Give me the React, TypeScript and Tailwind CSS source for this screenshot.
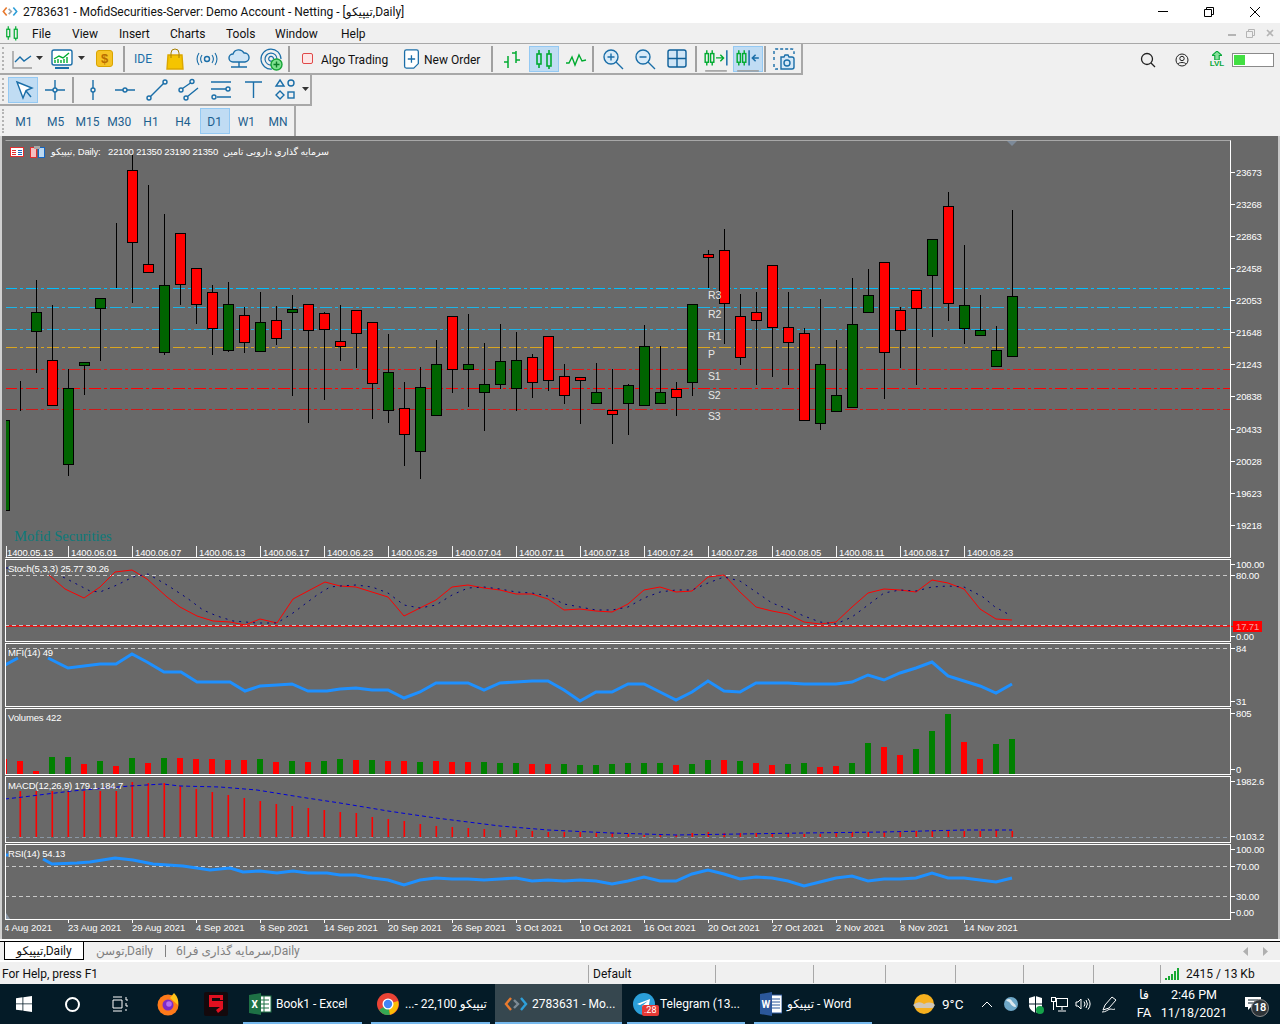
import type { ReactNode } from 'react'

type Candle = [number, number, number, number, 'r' | 'g'] // hi, top, bottom, lo

const FONT = "font-['Liberation_Sans','DejaVu_Sans',sans-serif]"
const UI = "font-['Roboto','DejaVu_Sans',sans-serif]"

const candles: Candle[] = [
  [420, 420, 510, 510, 'g'], [381, 381, 381, 411, 'r'], [280, 312, 331, 373, 'g'], [305, 360, 405, 405, 'r'],
  [369, 388, 464, 476, 'g'], [362, 362, 365, 395, 'g'], [298, 298, 308, 361, 'g'], [223, 223, 223, 288, 'r'],
  [155, 170, 242, 303, 'r'], [185, 264, 272, 272, 'r'], [214, 285, 352, 355, 'g'], [233, 233, 284, 305, 'r'],
  [268, 268, 304, 324, 'r'], [285, 292, 328, 355, 'r'], [282, 304, 350, 352, 'g'], [307, 315, 342, 353, 'r'],
  [292, 322, 351, 351, 'g'], [306, 320, 338, 345, 'r'], [295, 309, 312, 396, 'g'], [304, 304, 330, 423, 'r'],
  [312, 313, 329, 400, 'r'], [305, 341, 346, 361, 'r'], [310, 310, 333, 368, 'r'], [322, 322, 383, 419, 'r'],
  [334, 372, 410, 423, 'g'], [382, 408, 434, 466, 'r'], [367, 387, 451, 479, 'g'], [340, 364, 415, 415, 'g'],
  [316, 316, 369, 393, 'r'], [314, 364, 369, 407, 'g'], [343, 384, 392, 431, 'g'], [324, 361, 384, 389, 'g'],
  [332, 360, 388, 411, 'g'], [354, 357, 382, 398, 'r'], [336, 336, 380, 391, 'r'], [364, 376, 395, 404, 'r'],
  [377, 377, 380, 424, 'r'], [363, 392, 403, 403, 'g'], [369, 410, 414, 444, 'r'], [384, 385, 403, 435, 'g'],
  [325, 346, 405, 405, 'g'], [346, 392, 403, 403, 'g'], [382, 389, 397, 416, 'r'], [304, 304, 382, 396, 'g'],
  [250, 254, 257, 288, 'r'], [229, 250, 303, 344, 'r'], [294, 316, 357, 365, 'r'], [292, 312, 320, 385, 'r'],
  [265, 265, 327, 377, 'r'], [292, 327, 342, 385, 'r'], [328, 333, 420, 420, 'r'], [299, 364, 423, 430, 'g'],
  [340, 395, 411, 411, 'g'], [278, 324, 407, 407, 'g'], [269, 295, 312, 312, 'g'], [262, 262, 352, 399, 'r'],
  [307, 310, 330, 368, 'r'], [290, 290, 308, 385, 'r'], [239, 239, 275, 337, 'g'], [192, 206, 303, 321, 'r'],
  [245, 305, 328, 344, 'g'], [295, 330, 335, 335, 'g'], [326, 350, 366, 366, 'g'], [210, 296, 356, 356, 'g'],
]

const stochK = '49,575 65,589 84,598 100,587 115,572 132,570 147,579 167,597 180,607 197,616 213,621 230,622 245,625 260,619 277,623 293,599 308,591 325,582 340,586 356,587 372,592 388,597 404,616 420,608 436,600 452,587 468,585 484,588 500,590 516,594 532,594 548,599 564,610 580,609 596,611 612,612 628,604 644,590 660,587 676,592 692,591 708,577 724,575 740,592 756,607 772,611 788,614 804,622 820,624 836,622 852,607 868,593 884,589 900,590 916,592 932,580 948,583 964,589 980,609 996,619 1012,620'
const stochD = '63,577 90,591 100,592 117,585 133,577 148,574 167,585 187,598 203,610 217,616 233,621 257,623 277,623 293,613 317,595 330,587 340,586 356,585 372,587 388,593 404,605 420,608 436,605 452,595 468,588 484,587 500,589 516,592 532,593 548,596 564,604 580,607 596,610 612,610 628,607 644,598 660,592 676,590 692,590 708,583 724,577 740,581 756,592 772,603 788,609 804,616 820,622 836,624 852,617 868,605 884,593 900,590 916,591 932,587 948,586 964,587 983,597 995,607 1008,614'
const mfi = '48,658 68,668 84,666 100,664 116,664 132,654 147,662 164,672 181,672 197,682 230,682 245,691 260,686 277,685 292,684 308,691 327,691 340,689 356,688 372,690 388,690 404,698 420,692 436,683 452,683 468,683 484,690 500,683 516,682 532,681 548,681 564,690 580,701 596,692 612,692 628,684 644,684 660,692 676,700 692,692 708,681 724,691 740,692 756,683 772,683 788,683 804,684 820,684 836,684 852,682 868,675 884,680 900,673 916,668 932,662 948,676 964,681 980,686 996,693 1012,684'
const rsi = '43,859 52,864 77,863 90,862 115,858 133,860 153,864 183,866 210,870 230,868 243,872 260,871 277,873 293,871 308,873 327,873 340,875 356,875 372,878 388,880 404,885 420,880 436,878 452,879 468,879 484,880 500,879 516,878 532,881 548,880 564,881 580,880 596,881 612,884 628,881 644,877 660,881 676,881 692,874 708,870 724,874 740,879 756,877 772,878 788,881 804,886 820,882 836,878 852,876 868,881 884,879 900,879 916,878 932,873 948,878 964,878 980,880 996,882 1012,878'
const signal = '5,799 23,797 47,794 72,791 130,786 163,784 180,786 220,787 257,790 300,797 340,803 388,811 436,818 500,826 548,830 612,833 676,835 740,834 804,833 884,832 964,830 1012,830'

const volumes: [number, 'r' | 'g'][] = [
  [759, 'r'], [761, 'r'], [771, 'r'], [757, 'g'], [757, 'g'], [764, 'r'], [761, 'g'], [766, 'r'], [758, 'g'], [763, 'r'], [758, 'g'],
  [758, 'r'], [759, 'r'], [759, 'r'], [760, 'r'], [760, 'r'], [759, 'g'], [762, 'r'], [761, 'g'], [762, 'r'], [761, 'g'], [759, 'g'],
  [760, 'r'], [760, 'g'], [761, 'r'], [761, 'r'], [762, 'g'], [761, 'r'], [762, 'r'], [762, 'r'], [762, 'g'], [763, 'g'], [763, 'g'],
  [764, 'r'], [764, 'r'], [764, 'g'], [765, 'g'], [765, 'g'], [764, 'g'], [763, 'g'], [763, 'g'], [763, 'g'], [765, 'r'], [764, 'g'],
  [760, 'g'], [760, 'r'], [761, 'g'], [763, 'r'], [765, 'r'], [764, 'g'], [763, 'g'], [767, 'r'], [766, 'r'], [763, 'g'], [743, 'g'],
  [747, 'r'], [755, 'r'], [749, 'g'], [731, 'g'], [714, 'g'], [742, 'r'], [759, 'r'], [744, 'g'], [739, 'g'],
]

const macdTops = [791, 791, 791, 791, 791, 791, 791, 782, 783, 783, 786, 789, 792, 795, 798, 801, 804, 806, 808, 810, 812, 813, 817, 819, 821, 824, 826, 827, 828, 829, 830, 830, 831, 832, 832, 832, 833, 833, 834, 835, 835, 835, 833, 832, 833, 833, 833, 833, 833, 834, 834, 833, 832, 832, 832, 832, 831, 831, 831, 831, 831, 830, 831]

const priceTicks: [string, number][] = [['23673', 172], ['23268', 204], ['22863', 236], ['22458', 268], ['22053', 300], ['21648', 332], ['21243', 364], ['20838', 396], ['20433', 429], ['20028', 461], ['19623', 493], ['19218', 525]]
const hijri = ['1400.05.13', '1400.06.01', '1400.06.07', '1400.06.13', '1400.06.17', '1400.06.23', '1400.06.29', '1400.07.04', '1400.07.11', '1400.07.18', '1400.07.24', '1400.07.28', '1400.08.05', '1400.08.11', '1400.08.17', '1400.08.23']
const dates = ['4 Aug 2021', '23 Aug 2021', '29 Aug 2021', '4 Sep 2021', '8 Sep 2021', '14 Sep 2021', '20 Sep 2021', '26 Sep 2021', '3 Oct 2021', '10 Oct 2021', '16 Oct 2021', '20 Oct 2021', '27 Oct 2021', '2 Nov 2021', '8 Nov 2021', '14 Nov 2021']
const pivots: [number, string, string, number, number][] = [
  [288, '#00bfff', 'R3', 295, 1.4], [307, '#1cb4e8', 'R2', 314, 1], [329, '#1cb4e8', 'R1', 336, 1], [347, '#daa520', 'P', 354, 1],
  [369, '#e01818', 'S1', 376, 1], [388, '#ff0000', 'S2', 395, 1.4], [409, '#d01818', 'S3', 416, 1],
]

function Svg({ x, y, w, h, children }: { x: number; y: number; w: number; h: number; children?: ReactNode }) {
  return (
    <svg width={w} height={h} viewBox={`${x} ${y} ${w} ${h}`} className="block" fontSize={9.5} letterSpacing={-0.15} fill="#ffffff">
      {children}
    </svg>
  )
}

function Dashed({ y }: { y: number }) {
  return <line x1={5} x2={1230} y1={y + 0.5} y2={y + 0.5} stroke="#c8c8c8" strokeDasharray="4 3" />
}

function Pane({ y, h, frame, plot, axis }: { y: number; h: string; frame: string; plot: ReactNode; axis: ReactNode }) {
  const height = Number(h)
  return (
    <div className="flex">
      <div className={`w-[1226px] border-r border-white ${frame}`}>
        <Svg x={6} y={y + 1} w={1224} h={height - 2}>{plot}</Svg>
      </div>
      <Svg x={1231} y={y} w={47} h={height}>{axis}</Svg>
    </div>
  )
}

function AxisLabel({ y, t, tick = true }: { y: number; t: string; tick?: boolean }) {
  return (
    <>
      {tick && <line x1={1231} x2={1235} y1={y + 0.5} y2={y + 0.5} stroke="#fff" />}
      <text x={1236} y={y + 4}>{t}</text>
    </>
  )
}

function Ico({ children, s = 24 }: { children: ReactNode; s?: number }) {
  return <svg width={s} height={s} viewBox="0 0 24 24" fill="none" strokeWidth={1.4}>{children}</svg>
}

function Btn({ active, children }: { active?: boolean; children: ReactNode }) {
  return (
    <div className="flex h-full w-[32px] items-center justify-center">
      <div className={`flex h-[26px] w-[30px] items-center justify-center border ${active ? 'border-[#94c9f3] bg-[#c0dcf3]' : 'border-transparent'}`}>{children}</div>
    </div>
  )
}

const Sep = ({ cls = '' }: { cls?: string }) => <div className={`h-[26px] w-[2px] shrink-0 bg-[#a0a0a0] ${cls}`} />
const Handle = ({ w }: { w: string }) => (
  <div className={`h-full shrink-0 py-[3px] pl-[2px] ${w}`}><div className="h-full w-[2px] border-l-2 border-dotted border-[#b4b4b4]" /></div>
)
const Caret = () => <svg width={8} height={5}><path d="M0 0h7L3.5 4z" fill="#333" /></svg>

const B = '#1a6ea8'
const G = '#00ab30'

function CandleIcon({ s = 24 }: { s?: number }) {
  return (
    <Ico s={s}>
      <g stroke={G} strokeWidth={1.6}>
        <rect x={5} y={7} width={4} height={10} /><path d="M7 3v4M7 17v4" />
        <rect x={15} y={7} width={4} height={12} /><path d="M17 3v4M17 19v3" />
      </g>
    </Ico>
  )
}

function Toolbar1() {
  return (
    <div className="flex h-[31px] w-[803px] items-center border-r-2 border-b-2 border-[#a8a8a8]">
      <Handle w="w-[10px]" />
      <div className="flex w-[24px] justify-center">
        <Ico><path d="M3 4v17h19" stroke="#9a9a9a" /><path d="M5 15l5-5 4 4 7-5" stroke={B} /></Ico>
      </div>
      <div className="flex w-[12px] justify-center"><Caret /></div>
      <div className="flex w-[32px] justify-center">
        <Ico>
          <rect x={2} y={3} width={20} height={15} rx={2} stroke={B} fill="#fff" />
          <path d="M4 12l5-3 4 2 6-5" stroke={G} /><path d="M5 16v-3M8 16v-4M11 16v-3M14 16v-4M17 16v-6" stroke={G} />
          <path d="M5 21h14" stroke={B} strokeWidth={2} />
        </Ico>
      </div>
      <div className="flex w-[8px] justify-center"><Caret /></div>
      <div className="flex w-[37px] justify-center">
        <div className={`flex h-[17px] w-[17px] items-center justify-center rounded-[3px] border border-[#d9a400] bg-[#f6c324] text-[13px] font-bold text-[#b96e00] ${FONT}`}>$</div>
      </div>
      <Sep cls="mr-[2px]" />
      <Btn><span className="text-[12px] text-[#1a6ea8]">IDE</span></Btn>
      <Btn>
        <Ico>
          <path d="M5 8h14l1 14H4z" fill="#f5c400" stroke="#dba700" /><path d="M8 11V6a4 4 0 0 1 8 0v5" stroke="#a88000" strokeWidth={1} />
        </Ico>
      </Btn>
      <Btn>
        <Ico>
          <circle cx={12} cy={12} r={2.5} stroke={B} />
          <path d="M7 8a7 7 0 0 0 0 8M17 8a7 7 0 0 1 0 8M4 6a11 11 0 0 0 0 12M20 6a11 11 0 0 1 0 12" stroke={B} strokeWidth={1.1} />
        </Ico>
      </Btn>
      <Btn>
        <Ico>
          <path d="M6 15a4 4 0 0 1 0-8 6 6 0 0 1 11-1 4.5 4.5 0 0 1 1 9z" stroke={B} fill="#cfe5f6" />
          <path d="M12 15v5M4 20h16" stroke={B} />
        </Ico>
      </Btn>
      <Btn>
        <Ico>
          <path d="M13 22A10 10 0 1 1 22 12M13 18a6 6 0 1 1 5-6M13 14a2.4 2.4 0 1 1 1.5-2" stroke={B} strokeWidth={1.2} />
          <circle cx={17.5} cy={17.5} r={5.5} fill="#7fe08f" stroke="#17a438" />
          <path d="M17.5 14.5v6M14.5 17.5h6" stroke="#0d7d29" />
        </Ico>
      </Btn>
      <Sep cls="ml-px" />
      <div className="ml-[12px] h-[11px] w-[11px] shrink-0 rounded-[2px] border border-[#e04848] bg-[#fde6e6]" />
      <span className="ml-[8px] w-[78px] shrink-0 pt-[2px] text-[12px] text-[#111]">Algo Trading</span>
      <div className="flex w-[24px] justify-center">
        <Ico s={22}>
          <path d="M5 4a2 2 0 0 1 2-2h11a2 2 0 0 1 2 2v13l-5 5H7a2 2 0 0 1-2-2z" stroke={B} fill="#fff" />
          <path d="M12.5 8v8M8.5 12h8" stroke={B} />
        </Ico>
      </div>
      <span className="ml-[1px] w-[67px] shrink-0 pt-[2px] text-[12px] text-[#111]">New Order</span>
      <Sep cls="mr-[3px]" />
      <Btn>
        <Ico>
          <path d="M8 9v12M5 15h3M16 4v12M16 13h4M4 15h4" stroke={G} strokeWidth={1.5} /><path d="M12 6h4" stroke={G} strokeWidth={1.5} />
        </Ico>
      </Btn>
      <Btn active><CandleIcon /></Btn>
      <Btn><Ico><path d="M2 16h3l3-6 3 8 4-10 3 6 4-1" stroke={G} /></Ico></Btn>
      <Sep />
      <div className="w-[3px] shrink-0" />
      <Btn><Ico><circle cx={10} cy={10} r={7} stroke={B} fill="#d9ebf8" /><path d="M15 15l7 7M10 6.5v7M6.5 10h7" stroke={B} /></Ico></Btn>
      <Btn><Ico><circle cx={10} cy={10} r={7} stroke={B} fill="#d9ebf8" /><path d="M15 15l7 7M6.5 10h7" stroke={B} /></Ico></Btn>
      <Btn><Ico><rect x={3} y={3} width={18} height={17} rx={2} stroke="#0d5f99" fill="#cfe5f6" /><path d="M12 3v17M3 11.5h18" stroke="#0d5f99" /></Ico></Btn>
      <Sep cls="ml-[2px]" />
      <div className="w-[3px] shrink-0" />
      <Btn>
        <Ico s={26}>
          <g stroke={G} strokeWidth={1.3}><rect x={2} y={7} width={3} height={8} /><rect x={7} y={7} width={3} height={8} /><path d="M3.5 4v3M3.5 15v3M8.5 4v3M8.5 15v3M12 11h7M16 8l3 3-3 3" /></g>
          <path d="M22 4v14" stroke={B} /><path d="M2 23h20" stroke="#9a9a9a" />
        </Ico>
      </Btn>
      <Btn active>
        <Ico s={26}>
          <g stroke={G} strokeWidth={1.3}><rect x={2} y={7} width={3} height={8} /><rect x={7} y={7} width={3} height={8} /><path d="M3.5 4v3M3.5 15v3M8.5 4v3M8.5 15v3" /></g>
          <path d="M13 4v14M22 11h-6M19 8l-3 3 3 3" stroke={B} /><path d="M2 23h20" stroke="#9a9a9a" />
        </Ico>
      </Btn>
      <Sep />
      <div className="flex flex-1 justify-center">
        <Ico>
          <path d="M2 7V4a2 2 0 0 1 2-2h16a2 2 0 0 1 2 2v3M2 10v3M2 17v3a2 2 0 0 0 2 2h2" stroke={B} strokeDasharray="3 2" />
          <path d="M9 22h11a2 2 0 0 0 2-2v-8a2 2 0 0 0-2-2h-3l-1-2h-3l-1 2H9z" stroke={B} fill="#d5e8f7" /><circle cx={15} cy={16} r={3} stroke={B} />
        </Ico>
      </div>
    </div>
  )
}

function Toolbar2() {
  return (
    <div className="flex h-[31px] w-[312px] items-center border-r-2 border-b-2 border-[#a8a8a8]">
      <Handle w="w-[7px]" />
      <Btn active>
        <Ico><path d="M6 4l15 6-6 2.5L12 20z" stroke={B} fill="#fff" /><path d="M15 13l5 6" stroke={B} /></Ico>
      </Btn>
      <Btn><Ico><circle cx={12} cy={12} r={2} stroke={B} /><path d="M12 2v8M12 14v8M2 12h8M14 12h8" stroke={B} /></Ico></Btn>
      <Sep cls="ml-[1px] mr-[3px]" />
      <Btn><Ico><circle cx={12} cy={12} r={2} stroke={B} /><path d="M12 2v8M12 14v8" stroke={B} /></Ico></Btn>
      <Btn><Ico><circle cx={12} cy={12} r={2} stroke={B} /><path d="M2 12h8M14 12h8" stroke={B} /></Ico></Btn>
      <Btn><Ico><circle cx={4} cy={20} r={2} stroke={B} /><circle cx={20} cy={4} r={2} stroke={B} /><path d="M5.5 18.5l13-13" stroke={B} /></Ico></Btn>
      <Btn>
        <Ico><circle cx={4} cy={12} r={2} stroke={B} /><circle cx={15} cy={3.5} r={2} stroke={B} /><circle cx={9} cy={20} r={2} stroke={B} /><path d="M5.5 10.5l8-5.5M10.5 18.5L21 10" stroke={B} /></Ico>
      </Btn>
      <Btn>
        <Ico><path d="M2 4h20M2 11h15M8 19h14M2 11h0" stroke={B} /><circle cx={19} cy={11} r={2} stroke={B} /><circle cx={5} cy={19} r={2} stroke={B} /></Ico>
      </Btn>
      <Btn><Ico><path d="M4 4h17M12.5 4v16" stroke={B} /></Ico></Btn>
      <Btn>
        <Ico><path d="M7 2l4 6H3z" stroke={B} /><circle cx={18} cy={5} r={3} stroke={B} /><path d="M7 13l4 4-4 4-4-4z" stroke={B} /><rect x={15} y={14} width={6} height={6} stroke={B} /></Ico>
      </Btn>
      <div className="flex flex-1 justify-center"><Caret /></div>
    </div>
  )
}

function Toolbar3() {
  const frames = ['M1', 'M5', 'M15', 'M30', 'H1', 'H4', 'D1', 'W1', 'MN']
  return (
    <div className="flex h-[30px] w-[296px] items-center border-r-2 border-[#a8a8a8]">
      <Handle w="w-[8px]" />
      {frames.map((f) => (
        <Btn key={f} active={f === 'D1'}><span className="pt-[2px] text-[12px] text-[#1d5f8e]">{f}</span></Btn>
      ))}
    </div>
  )
}

function ChartArea() {
  return (
    <div className={`flex h-[803px] flex-col gap-px border-r-2 border-l-2 border-r-[#c8c8c8] border-l-[#d0d0d0] bg-[#696969] pt-[4px] pl-[3px] ${FONT}`}>
      <Pane
        y={140}
        h="418"
        frame="border-t border-b border-l border-t-[#a8a8a8] border-b-white border-l-[#696969]"
        plot={
          <>
            {pivots.map(([y, c, , , sw]) => (
              <line key={y} x1={5} x2={1230} y1={y + 0.5} y2={y + 0.5} stroke={c} strokeWidth={sw} strokeDasharray="12 3 3 3" shapeRendering="crispEdges" />
            ))}
            {candles.map(([hi, top, bottom, lo, c], i) => {
              const x = 4 + i * 16
              return (
                <g key={x} shapeRendering="crispEdges">
                  <line x1={x + 0.5} x2={x + 0.5} y1={hi} y2={lo} stroke="#000" />
                  <rect x={x - 4.5} y={top + 0.5} width={10} height={bottom - top} fill={c === 'r' ? '#ff0000' : '#006400'} stroke="#000" />
                </g>
              )
            })}
            {pivots.map(([y, , t, ly]) => (
              <text key={y} x={708} y={ly + 4} fontSize={10.5} fill="#e8e8e8">{t}</text>
            ))}
            <path d="M1007 141h10l-5 5z" fill="#7d8a99" />
            <g shapeRendering="crispEdges">
              <rect x={10.5} y={147.5} width={13} height={9} fill="#fff" stroke="#e03030" />
              <path d="M12 150h4M12 152h4M12 154h4" stroke="#e03030" /><path d="M18 150h4M18 152h4M18 154h4" stroke="#1565c0" />
              <rect x={30.5} y={147.5} width={6} height={10} fill="#f5c0c0" stroke="#e03030" />
              <rect x={38.5} y={147.5} width={6} height={10} fill="#bcd8f0" stroke="#1565c0" />
              <rect x={34} y={146} width={6} height={3} fill="#a8a8a8" />
            </g>
            <text x={51} y={155} textAnchor="start">تیپیکو, Daily:</text>
            <text x={108} y={155}>22100 21350 23190 21350</text>
            <text x={223} y={155} textLength={106}>سرمایه گذاری دارویی تامین</text>
            <text x={14} y={541} fontFamily="Liberation Serif" fontSize={14.6} letterSpacing={0} fill="#0c7a7a">Mofid Securities</text>
            {hijri.map((t, i) => (
              <g key={t}>
                <line x1={i === 0 ? 6.5 : 4.5 + i * 64} x2={i === 0 ? 6.5 : 4.5 + i * 64} y1={546} y2={557} stroke="#f2f2f2" />
                <text x={(i === 0 ? 7 : 7 + i * 64)} y={556}>{t}</text>
              </g>
            ))}
          </>
        }
        axis={priceTicks.map(([t, y]) => <AxisLabel key={t} y={y} t={t} />)}
      />
      <Pane
        y={559}
        h="83"
        frame="border border-white"
        plot={
          <>
            <Dashed y={575} />
            <line x1={5} x2={1230} y1={626} y2={626} stroke="#ff0000" strokeWidth={1.6} />
            <Dashed y={625} />
            <polyline points={stochK} fill="none" stroke="#ff0000" />
            <polyline points={stochD} fill="none" stroke="#000080" strokeDasharray="2 5" />
            <path d="M6 568h2" stroke="#000080" />
            <text x={8} y={572}>Stoch(5,3,3) 25.77 30.26</text>
          </>
        }
        axis={
          <>
            <AxisLabel y={564} t="100.00" />
            <AxisLabel y={575} t="80.00" />
            <rect x={1233} y={621} width={29} height={11} fill="#ff0000" />
            <line x1={1231} x2={1233} y1={626.5} y2={626.5} stroke="#ff0000" />
            <text x={1236} y={630} fill="#f2a0a0">17.71</text>
            <AxisLabel y={636} t="0.00" />
          </>
        }
      />
      <Pane
        y={643}
        h="64"
        frame="border border-white"
        plot={
          <>
            <Dashed y={648} />
            <path d="M5 665L18 658" stroke="#1e90ff" strokeWidth={3} />
            <polyline points={mfi} fill="none" stroke="#1e90ff" strokeWidth={3} />
            <rect x={6} y={647} width={2} height={10} fill="#696969" />
            <text x={8} y={656}>MFI(14) 49</text>
          </>
        }
        axis={
          <>
            <AxisLabel y={648} t="84" />
            <AxisLabel y={701} t="31" />
          </>
        }
      />
      <Pane
        y={708}
        h="67"
        frame="border border-white"
        plot={
          <>
            {volumes.map(([top, c], i) => (
              <rect key={i} x={1 + i * 16} y={top} width={6} height={774 - top} fill={c === 'r' ? '#ff0000' : '#008000'} />
            ))}
            <text x={8} y={721}>Volumes 422</text>
          </>
        }
        axis={
          <>
            <AxisLabel y={713} t="805" />
            <AxisLabel y={769} t="0" />
          </>
        }
      />
      <Pane
        y={776}
        h="67"
        frame="border border-white"
        plot={
          <>
            <line x1={5} x2={1230} y1={837.5} y2={837.5} stroke="#8a96a3" strokeDasharray="4 3" />
            {macdTops.map((top, i) => (
              <rect key={i} x={19.5 + i * 16} y={top} width={1.6} height={837 - top} fill="#ff0000" />
            ))}
            <polyline points={signal} fill="none" stroke="#0000d8" strokeDasharray="4 3" />
            <text x={8} y={789}>MACD(12,26,9) 179.1 184.7</text>
          </>
        }
        axis={
          <>
            <AxisLabel y={781} t="1982.6" />
            <AxisLabel y={836} t="0103.2" />
          </>
        }
      />
      <Pane
        y={844}
        h="76"
        frame="border border-white"
        plot={
          <>
            <Dashed y={866} />
            <Dashed y={896} />
            <path d="M5 855h3" stroke="#1e90ff" strokeWidth={3} />
            <polyline points={rsi} fill="none" stroke="#1e90ff" strokeWidth={3} />
            <path d="M6 913l4 6H6z" fill="#8d9aaa" />
            <text x={8} y={857}>RSI(14) 54.13</text>
          </>
        }
        axis={
          <>
            <AxisLabel y={849} t="100.00" />
            <AxisLabel y={866} t="70.00" />
            <AxisLabel y={896} t="30.00" />
            <AxisLabel y={912} t="0.00" />
          </>
        }
      />
      <svg width={1275} height={17} viewBox="5 920 1275 17" className="-mt-px block" fontSize={9.5} fill="#ffffff">
        {dates.map((d, i) => (
          <g key={d}>
            <line x1={4.5 + i * 64} x2={4.5 + i * 64} y1={920} y2={923} stroke="#fff" />
            <text x={4 + i * 64} y={931}>{d}</text>
          </g>
        ))}
      </svg>
    </div>
  )
}

function TaskItem({ w, active, children }: { w: string; active?: boolean; children: ReactNode }) {
  return (
    <div className={`flex h-full items-center gap-[5px] border-b-[2px] border-[#76b9ed] pt-[2px] pl-[5px] ${w} ${active ? 'bg-[#36474f]' : ''}`}>{children}</div>
  )
}

function Mt5Icon() {
  return (
    <svg width={24} height={16} viewBox="0 0 24 16" fill="none" strokeWidth={2.4}>
      <path d="M7 2L2 8l5 6" stroke="#e87a2e" /><path d="M10 4l4 4-4 4" stroke="#7c8a94" /><path d="M17 2l5 6-5 6" stroke="#2e9fd8" />
    </svg>
  )
}

function Taskbar() {
  return (
    <div className={`flex h-[40px] items-stretch bg-[#041b27] text-[12px] text-white ${UI}`}>
      <div className="flex w-[48px] items-center justify-center">
        <svg width={16} height={16} viewBox="0 0 16 16" fill="#fff"><path d="M0 2.2l6.5-.9v6.2H0zM7.3 1.2L16 0v7.5H7.3zM0 8.3h6.5v6.3L0 13.7zM7.3 8.3H16V16l-8.7-1.2z" /></svg>
      </div>
      <div className="flex w-[48px] items-center justify-center"><div className="h-[15px] w-[15px] rounded-full border-2 border-white" /></div>
      <div className="flex w-[48px] items-center justify-center">
        <svg width={16} height={16} viewBox="0 0 16 16" fill="none" stroke="#fff"><path d="M1 1h9M1 15h9M1 4h9v8H1zM14 1v3h2M14 7v3h2M14 13v2" /></svg>
      </div>
      <div className="flex w-[48px] items-center justify-center">
        <svg width={24} height={24} viewBox="0 0 24 24">
          <circle cx={12} cy={13} r={10.5} fill="#ff7a1a" /><path d="M18 1c3 3 5 7 4 12L14 6z" fill="#ffc21a" />
          <circle cx={12} cy={13} r={5.5} fill="#7d2bc9" /><circle cx={13} cy={12} r={2.8} fill="#b56df0" />
        </svg>
      </div>
      <div className="flex w-[48px] items-center justify-center">
        <svg width={24} height={24} viewBox="0 0 24 24">
          <rect width={24} height={24} rx={2} fill="#14090c" />
          <path d="M5 3h14v5h-3V6H8v3h11v8l-5 4-2-3 4-3H5V3z" fill="#e01020" />
        </svg>
      </div>
      <div className="ml-[3px] flex">
        <TaskItem w="w-[119px]">
          <svg width={24} height={24} viewBox="0 0 24 24">
            <rect x={9} y={4} width={14} height={16} fill="#fff" stroke="#1e7145" /><path d="M12 8h9M12 12h9M12 16h9M16 4v16" stroke="#1e7145" />
            <path d="M1 3l12-2v22L1 21z" fill="#1e7145" /><text x={3.5} y={16} fontSize={10} fontWeight={700} fill="#fff">X</text>
          </svg>
          <span className="-ml-[1px]">Book1 - Excel</span>
        </TaskItem>
      </div>
      <div className="ml-[9px] flex">
        <TaskItem w="w-[119px]">
          <svg width={24} height={24} viewBox="0 0 24 24">
            <circle cx={12} cy={12} r={11} fill="#ea4335" /><path d="M12 12L3 18a11 11 0 0 0 11 4.8z" fill="#34a853" /><path d="M12 12l10-3a11 11 0 0 1-8 13.8z" fill="#fbbc05" />
            <circle cx={12} cy={12} r={5.5} fill="#fff" /><circle cx={12} cy={12} r={4.2} fill="#4285f4" />
          </svg>
          <span className="whitespace-nowrap">...- 22,100 تیپیکو</span>
        </TaskItem>
      </div>
      <div className="ml-[5px] flex">
        <TaskItem w="w-[127px] pl-[9px]" active>
          <Mt5Icon />
          <span className="-ml-[1px] whitespace-nowrap">2783631 - Mo...</span>
        </TaskItem>
      </div>
      <div className="ml-[5px] flex">
        <TaskItem w="w-[118px] pl-[6px]">
          <div className="relative h-[22px] w-[22px]">
            <svg width={22} height={22} viewBox="0 0 22 22"><circle cx={11} cy={11} r={11} fill="#2b9fd9" /><path d="M4 11l13-5-2 11-4-3-2 2v-3l6-5-8 4z" fill="#fff" /></svg>
            <span className="absolute top-[12px] left-[9px] h-[11px] rounded-[2px] bg-[#e53935] px-[2px] text-[9px] leading-[11px]">.28</span>
          </div>
          <span className="whitespace-nowrap">Telegram (13...</span>
        </TaskItem>
      </div>
      <div className="ml-[9px] flex">
        <TaskItem w="w-[118px] pl-[6px]">
          <svg width={22} height={24} viewBox="0 0 22 24">
            <rect x={8} y={3} width={14} height={18} fill="#fff" stroke="#2b579a" /><path d="M11 7h9M11 10h9M11 13h9M11 16h9" stroke="#2b579a" />
            <path d="M0 2l12-2v24L0 22z" fill="#2b579a" /><text x={1.5} y={16} fontSize={10} fontWeight={700} fill="#fff">W</text>
          </svg>
          <span className="whitespace-nowrap">تیپیکو - Word</span>
        </TaskItem>
      </div>
      <div className="ml-[38px] flex w-[28px] items-center justify-center">
        <svg width={26} height={24} viewBox="0 0 26 24">
          <circle cx={13} cy={12} r={10} fill="#f6b01e" /><path d="M2 13c5-4 8-3 11-1 4-2 8-2 11 1l-2 3H5z" fill="#cfc6b8" />
        </svg>
      </div>
      <div className="ml-[4px] flex w-[30px] items-center text-[13.5px]">9°C</div>
      <div className="ml-[3px] flex w-[24px] items-center justify-center">
        <svg width={12} height={8} fill="none" stroke="#fff"><path d="M1 7l5-5 5 5" /></svg>
      </div>
      <div className="flex w-[24px] items-center justify-center">
        <svg width={16} height={16} viewBox="0 0 16 16"><circle cx={8} cy={8} r={7} fill="#6fa8c8" /><path d="M3 4c3-2 5-1 6 1s4 3 4 6c-3 0-5-2-6-4S4 6 3 4z" fill="#dde8ee" /></svg>
      </div>
      <div className="relative flex w-[24px] items-center justify-center">
        <svg width={15} height={17} viewBox="0 0 15 17"><path d="M1 2l6.5-2L14 2v7c0 4-3 6-6.5 8C4 15 1 13 1 9z" fill="#fff" /><path d="M7.5 0v17M1 8h13" stroke="#041b27" /></svg>
        <span className="absolute top-[22px] left-[13px] h-[8px] w-[8px] rounded-full bg-[#16a34a]" />
      </div>
      <div className="flex w-[24px] items-center justify-center">
        <svg width={17} height={15} viewBox="0 0 17 15" fill="none" stroke="#fff"><rect x={5.5} y={1.5} width={11} height={8} /><rect x={.5} y={.5} width={4} height={4} /><path d="M11 10v3M7 14h8M2.5 5v8" /></svg>
      </div>
      <div className="flex w-[24px] items-center justify-center">
        <svg width={16} height={14} viewBox="0 0 16 14" fill="none" stroke="#fff"><path d="M1 5h2l3-3v10l-3-3H1zM9 4.5a4 4 0 0 1 0 5M11 3a7 7 0 0 1 0 8M13 1.5a9 9 0 0 1 0 11" /></svg>
      </div>
      <div className="ml-[3px] flex w-[24px] items-center justify-center">
        <svg width={18} height={18} viewBox="0 0 18 18" fill="none" stroke="#fff"><path d="M2 15l2-5 7-8 4 3-7 8zM1 17c4 0 5-2 8-3 2 0 3 1 5 0" /></svg>
      </div>
      <div className="ml-[4px] flex w-[36px] flex-col items-center justify-center text-[13px] leading-[18px]"><span>فا</span><span>FA</span></div>
      <div className="flex w-[64px] flex-col items-center justify-center text-[12.5px] leading-[18px] whitespace-nowrap"><span>2:46 PM</span><span>11/18/2021</span></div>
      <div className="relative flex flex-1 items-center justify-center">
        <svg width={16} height={14} viewBox="0 0 16 14" fill="#fff"><path d="M0 0h16v10H6l-3 3v-3H0z" /><path d="M3 3h10M3 6h10" stroke="#041b27" /></svg>
        <span className="absolute top-[15px] left-[25px] flex h-[18px] w-[18px] items-center justify-center rounded-full border border-[#8a8a8a] bg-[#2e3438] text-[11px] font-semibold">18</span>
      </div>
    </div>
  )
}

export default function App() {
  const statusCells = ['w-[127px]', 'w-[98px]', 'w-[72px]', 'w-[70px]', 'w-[68px]', 'w-[70px]', 'w-[67px]']
  return (
    <div className={`h-[1024px] w-[1280px] overflow-hidden bg-[#f0f0f0] text-[12px] text-[#111] ${UI}`}>
      <div className="flex h-[23px] items-center bg-white">
        <div className="ml-[2px] flex w-[21px] shrink-0"><svg width={16} height={11} viewBox="0 0 24 16" fill="none" strokeWidth={2.4}><path d="M7 2L2 8l5 6" stroke="#e87a2e" /><path d="M10 4l4 4-4 4" stroke="#9aa5ac" /><path d="M17 2l5 6-5 6" stroke="#2e9fd8" /></svg></div>
        <span className="whitespace-nowrap pt-[1px]">2783631 - MofidSecurities-Server: Demo Account - Netting - [تیپیکو,Daily]</span>
        <div className="ml-auto flex items-center pr-[2px]">
          <div className="flex w-[46px] justify-center"><div className="h-px w-[10px] bg-black" /></div>
          <div className="flex w-[46px] justify-center"><svg width={10} height={10} fill="none" stroke="#000"><path d="M.5 2.5h7v7h-7zM2.5 2.5v-2h7v7h-2" /></svg></div>
          <div className="flex w-[46px] justify-center"><svg width={10} height={10} stroke="#000"><path d="M0 0l10 10M10 0L0 10" /></svg></div>
        </div>
      </div>
      <div className="flex h-[21px] items-center border-b border-[#a8a8a8]">
        <div className="ml-[3px] flex w-[29px] shrink-0"><CandleIcon s={18} /></div>
        <span className="w-[40px] pt-[1px]">File</span>
        <span className="w-[47px] pt-[1px]">View</span>
        <span className="w-[51px] pt-[1px]">Insert</span>
        <span className="w-[56px] pt-[1px]">Charts</span>
        <span className="w-[49px] pt-[1px]">Tools</span>
        <span className="w-[66px] pt-[1px]">Window</span>
        <span className="pt-[1px]">Help</span>
        <div className="ml-auto flex items-center pr-[1px] text-[#b4b4b4]">
          <div className="flex w-[19px] justify-center"><div className="mt-[3px] h-[2px] w-[8px] bg-[#b4b4b4]" /></div>
          <div className="flex w-[19px] justify-center"><svg width={9} height={9} fill="none" stroke="#b4b4b4"><path d="M.5 2.5h6v6h-6zM2.5 2.5v-2h6v6h-2" /></svg></div>
          <div className="flex w-[19px] justify-center"><svg width={8} height={8} stroke="#b4b4b4" strokeWidth={1.6}><path d="M1 1l6 6M7 1L1 7" /></svg></div>
        </div>
      </div>
      <div className="relative">
        <Toolbar1 />
        <div className="absolute top-[7px] right-[6px] flex items-center">
          <div className="flex w-[34px] justify-center pr-[2px]"><svg width={16} height={16} fill="none" stroke="#222" strokeWidth={1.3}><circle cx={7} cy={7} r={5.5} /><path d="M11 11l4 4" /></svg></div>
          <div className="flex w-[34px] justify-center pr-[2px]"><svg width={14} height={14} fill="none" stroke="#222"><circle cx={7} cy={7} r={6} /><circle cx={7} cy={5.5} r={2.2} /><path d="M3 11c1-2 7-2 8 0" /></svg></div>
          <div className={`flex w-[34px] flex-col items-center text-[8px] leading-[8px] font-bold text-[#0aa83a] ${FONT}`}>
            <svg width={10} height={9} viewBox="0 0 9 8"><path d="M4.5 0L9 4H6.5v4h-4V4H0z" fill="#8be09e" stroke="#0aa83a" /></svg>
            <span>LVL</span>
          </div>
          <div className="ml-[-2px] h-[14px] w-[42px] border border-[#8a8a8a] bg-white p-px"><div className="h-full w-[11px] bg-[#42df42]" /></div>
        </div>
      </div>
      <Toolbar2 />
      <Toolbar3 />
      <ChartArea />
      <div className="h-[3px] border-b border-black bg-white" />
      <div className="flex h-[20px] items-stretch border-b-2 border-white text-[#808080]">
        <div className="ml-[4px] flex w-[80px] items-center justify-center border-x border-b border-black bg-white text-[#111]">تیپیکو,Daily</div>
        <div className="flex w-[81px] items-center justify-center">توسن,Daily</div>
        <div className="my-[3px] w-px bg-[#808080]" />
        <div className="ml-[10px] flex items-center">سرمایه گذاری فرا6,Daily</div>
        <div className="ml-auto flex items-center gap-[13px] pr-[12px]">
          <svg width={6} height={9}><path d="M5 0v9L0 4.5z" fill="#b0b0b0" /></svg>
          <svg width={6} height={9}><path d="M1 0v9l5-4.5z" fill="#b0b0b0" /></svg>
        </div>
      </div>
      <div className="flex h-[22px] items-center pt-[1px]">
        <div className="w-[588px] pl-[2px]">For Help, press F1</div>
        {statusCells.map((c, i) => (
          <div key={c} className={`h-[18px] border-l border-[#a8a8a8] pl-[4px] leading-[18px] ${c}`}>{i === 0 ? 'Default' : ''}</div>
        ))}
        <div className="flex h-[18px] flex-1 items-center gap-[6px] border-l border-[#a8a8a8] pl-[4px]">
          <svg width={15} height={12} fill="#18a833"><path d="M0 10h2v2H0zM3 8h2v4H3zM6 6h2v6H6zM9 3h2v9H9zM12 0h2v12h-2z" /></svg>
          <span>2415 / 13 Kb</span>
        </div>
      </div>
      <Taskbar />
    </div>
  )
}
